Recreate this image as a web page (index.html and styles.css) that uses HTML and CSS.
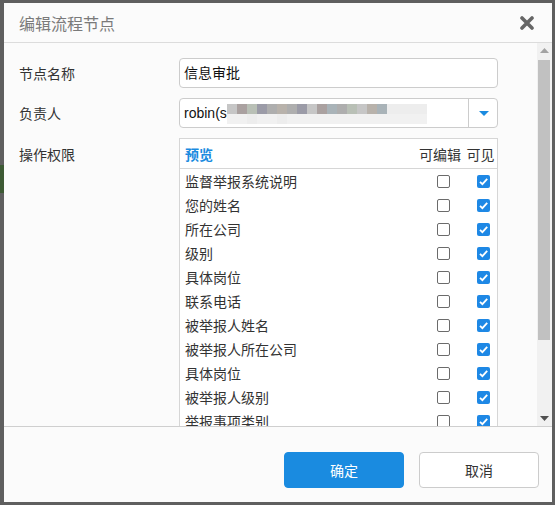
FILE: index.html
```html
<!DOCTYPE html>
<html lang="zh-CN">
<head>
<meta charset="utf-8">
<title>编辑流程节点</title>
<link rel="stylesheet" href="styles.css">
</head>
<body>
<div class="under-green"></div>
<div class="dialog">
  <div class="dlg-head">
    <span class="dlg-title">编辑流程节点</span>
    <svg class="close" width="14" height="14" viewBox="0 0 14 14"><path d="M2 2 L12 12 M12 2 L2 12" stroke="#666" stroke-width="3.6" stroke-linecap="round" fill="none"/></svg>
  </div>
  <div class="dlg-main">
  <div class="dlg-body">
    <div class="form-row">
      <div class="label">节点名称</div>
      <div class="input">信息审批</div>
    </div>
    <div class="form-row">
      <div class="label">负责人</div>
      <div class="select">
        <div class="select-val">
          <span class="val-text">robin(s</span>
          <span class="mosaic">
            <span class="mrow">
              <i class="c1"></i><i class="c2"></i><i class="c3"></i><i class="c4"></i><i class="c5"></i><i class="c6"></i><i class="c5"></i><i class="c4"></i><i class="c1"></i><i class="c2"></i><i class="c7"></i><i class="c5"></i><i class="c3"></i><i class="c1"></i><i class="c6"></i><i class="c7"></i><i class="c8"></i><i class="c8"></i><i class="c8"></i><i class="c8"></i>
            </span>
            <span class="mrow low">
              <i class="c0"></i><i class="c0"></i><i class="c8"></i><i class="c0"></i><i class="c0"></i><i class="c8"></i><i class="c0"></i><i class="c0"></i><i class="c0"></i><i class="c0"></i><i class="c0"></i><i class="c0"></i><i class="c0"></i><i class="c0"></i><i class="c0"></i><i class="c0"></i><i class="c0"></i><i class="c0"></i><i class="c0"></i><i class="c0"></i>
            </span>
          </span>
        </div>
        <div class="select-btn"><span class="tri"></span></div>
      </div>
    </div>
    <div class="form-row">
      <div class="label label-top">操作权限</div>
      <div class="perm">
        <div class="perm-head">
          <span class="ph-name">预览</span>
          <span class="ph-col">可编辑</span>
          <span class="ph-col">可见</span>
        </div>
        <div class="perm-row"><span class="pr-name">监督举报系统说明</span><span class="cb-cell"><span class="cb"></span></span><span class="cb-cell"><span class="cb on"><svg viewBox="0 0 13 13" width="13" height="13"><path d="M3 6.8 L5.4 9.2 L10.2 3.8" stroke="#fff" stroke-width="1.8" fill="none"/></svg></span></span></div>
        <div class="perm-row"><span class="pr-name">您的姓名</span><span class="cb-cell"><span class="cb"></span></span><span class="cb-cell"><span class="cb on"><svg viewBox="0 0 13 13" width="13" height="13"><path d="M3 6.8 L5.4 9.2 L10.2 3.8" stroke="#fff" stroke-width="1.8" fill="none"/></svg></span></span></div>
        <div class="perm-row"><span class="pr-name">所在公司</span><span class="cb-cell"><span class="cb"></span></span><span class="cb-cell"><span class="cb on"><svg viewBox="0 0 13 13" width="13" height="13"><path d="M3 6.8 L5.4 9.2 L10.2 3.8" stroke="#fff" stroke-width="1.8" fill="none"/></svg></span></span></div>
        <div class="perm-row"><span class="pr-name">级别</span><span class="cb-cell"><span class="cb"></span></span><span class="cb-cell"><span class="cb on"><svg viewBox="0 0 13 13" width="13" height="13"><path d="M3 6.8 L5.4 9.2 L10.2 3.8" stroke="#fff" stroke-width="1.8" fill="none"/></svg></span></span></div>
        <div class="perm-row"><span class="pr-name">具体岗位</span><span class="cb-cell"><span class="cb"></span></span><span class="cb-cell"><span class="cb on"><svg viewBox="0 0 13 13" width="13" height="13"><path d="M3 6.8 L5.4 9.2 L10.2 3.8" stroke="#fff" stroke-width="1.8" fill="none"/></svg></span></span></div>
        <div class="perm-row"><span class="pr-name">联系电话</span><span class="cb-cell"><span class="cb"></span></span><span class="cb-cell"><span class="cb on"><svg viewBox="0 0 13 13" width="13" height="13"><path d="M3 6.8 L5.4 9.2 L10.2 3.8" stroke="#fff" stroke-width="1.8" fill="none"/></svg></span></span></div>
        <div class="perm-row"><span class="pr-name">被举报人姓名</span><span class="cb-cell"><span class="cb"></span></span><span class="cb-cell"><span class="cb on"><svg viewBox="0 0 13 13" width="13" height="13"><path d="M3 6.8 L5.4 9.2 L10.2 3.8" stroke="#fff" stroke-width="1.8" fill="none"/></svg></span></span></div>
        <div class="perm-row"><span class="pr-name">被举报人所在公司</span><span class="cb-cell"><span class="cb"></span></span><span class="cb-cell"><span class="cb on"><svg viewBox="0 0 13 13" width="13" height="13"><path d="M3 6.8 L5.4 9.2 L10.2 3.8" stroke="#fff" stroke-width="1.8" fill="none"/></svg></span></span></div>
        <div class="perm-row"><span class="pr-name">具体岗位</span><span class="cb-cell"><span class="cb"></span></span><span class="cb-cell"><span class="cb on"><svg viewBox="0 0 13 13" width="13" height="13"><path d="M3 6.8 L5.4 9.2 L10.2 3.8" stroke="#fff" stroke-width="1.8" fill="none"/></svg></span></span></div>
        <div class="perm-row"><span class="pr-name">被举报人级别</span><span class="cb-cell"><span class="cb"></span></span><span class="cb-cell"><span class="cb on"><svg viewBox="0 0 13 13" width="13" height="13"><path d="M3 6.8 L5.4 9.2 L10.2 3.8" stroke="#fff" stroke-width="1.8" fill="none"/></svg></span></span></div>
        <div class="perm-row"><span class="pr-name">举报事项类别</span><span class="cb-cell"><span class="cb"></span></span><span class="cb-cell"><span class="cb on"><svg viewBox="0 0 13 13" width="13" height="13"><path d="M3 6.8 L5.4 9.2 L10.2 3.8" stroke="#fff" stroke-width="1.8" fill="none"/></svg></span></span></div>
      </div>
    </div>
  </div>
  <div class="vscroll">
    <div class="sb-btn"><svg width="9" height="5" viewBox="0 0 9 5"><path d="M0 5 L4.5 0 L9 5 Z" fill="#a3a3a3"/></svg></div>
    <div class="sb-track"><div class="sb-thumb"></div></div>
    <div class="sb-btn"><svg width="9" height="5" viewBox="0 0 9 5"><path d="M0 0 L9 0 L4.5 5 Z" fill="#505050"/></svg></div>
  </div>
  </div>
  <div class="dlg-foot">
    <button class="btn btn-primary">确定</button>
    <button class="btn btn-default">取消</button>
  </div>
</div>
</body>
</html>
```
FILE: styles.css
```css
* { box-sizing: border-box; }
html, body { margin: 0; padding: 0; }
body {
  width: 555px;
  height: 505px;
  background: #5f5f5f;
  padding: 3px 3px 3px 4px;
  font-family: "Liberation Sans", "Noto Sans CJK SC", sans-serif;
  font-size: 14px;
  color: #333;
  overflow: hidden;
  position: relative;
}
.under-green {
  position: absolute;
  left: 0;
  top: 165px;
  width: 4px;
  height: 28px;
  background: #3d5a34;
}
.dialog {
  width: 548px;
  height: 499px;
  background: #fbfbfb;
  display: flex;
  flex-direction: column;
}
.dlg-head {
  height: 40px;
  flex: none;
  border-bottom: 1px solid #dcdcdc;
  display: flex;
  align-items: center;
  justify-content: space-between;
  padding: 0 18px 0 15px;
}
.dlg-title {
  font-size: 16px;
  color: #7a7a7a;
  padding-top: 1px;
}
.close { display: block; margin-top: 1px; }
.dlg-main {
  height: 383px;
  flex: none;
  display: flex;
}
.dlg-body {
  flex: 1;
  overflow: hidden;
  padding: 15px 0 0 15px;
}
.vscroll {
  width: 15px;
  flex: none;
  background: #f1f1f1;
  display: flex;
  flex-direction: column;
}
.sb-btn {
  height: 15px;
  flex: none;
  display: flex;
  align-items: center;
  justify-content: center;
}
.sb-btn svg { display: block; }
.sb-track {
  flex: 1;
  padding: 2px 2px 0 1px;
}
.sb-thumb {
  height: 280px;
  background: #c1c1c1;
}
.form-row {
  display: flex;
  align-items: center;
  margin-bottom: 10px;
}
.form-row:last-child { margin-bottom: 0; align-items: flex-start; }
.label {
  width: 160px;
  flex: none;
  color: #333;
}
.label-top { padding-top: 6px; }
.input {
  width: 319px;
  height: 30px;
  border: 1px solid #ccc;
  border-radius: 4px;
  background: #fff;
  padding: 0 4px;
  line-height: 28px;
  color: #111;
  font-size: 14px;
}
.select {
  width: 319px;
  height: 30px;
  border: 1px solid #ccc;
  border-radius: 4px;
  background: #fff;
  display: flex;
}
.select-val {
  flex: 1;
  display: flex;
  align-items: center;
  padding-left: 4px;
  color: #111;
}
.val-text { font-size: 14px; }
.mosaic {
  display: flex;
  flex-direction: column;
  margin-top: 2px;
}
.mrow { display: flex; height: 10px; }
.mrow i { display: block; width: 10px; height: 10px; }
.c0 { background: #f1f1f1; }
.c1 { background: #c6c6c6; }
.c2 { background: #aaa1a0; }
.c3 { background: #b9c0b6; }
.c4 { background: #9b9ba7; }
.c5 { background: #aeaeae; }
.c6 { background: #b8b2ab; }
.c7 { background: #a9b3b8; }
.c8 { background: #ededed; }
.select-btn {
  width: 29px;
  flex: none;
  border-left: 1px solid #ccc;
  display: flex;
  align-items: center;
  justify-content: center;
}
.tri {
  width: 0;
  height: 0;
  border-left: 5px solid transparent;
  border-right: 5px solid transparent;
  border-top: 5px solid #1a8be0;
  margin-left: 1px;
}
.perm {
  width: 319px;
  flex: none;
  border: 1px solid #d6d6d6;
  background: #fff;
}
.perm-head, .perm-row {
  display: grid;
  grid-template-columns: 1fr 48px 33px;
  align-items: center;
}
.perm-head {
  height: 30px;
  border-bottom: 1px solid #d6d6d6;
}
.ph-name {
  padding-left: 5px;
  color: #1a8be0;
  font-weight: bold;
}
.ph-col { text-align: center; color: #333; }
.perm-row { height: 24px; }
.pr-name { padding-left: 5px; color: #333; }
.cb-cell {
  display: flex;
  justify-content: center;
  padding-left: 6px;
}
.cb {
  width: 13px;
  height: 13px;
  border: 1px solid #6b6b6b;
  border-radius: 2px;
  background: #fff;
  display: block;
}
.cb.on {
  border: none;
  background: #1e88e5;
}
.cb svg { display: block; }
.dlg-foot {
  flex: 1;
  border-top: 1px solid #cfcfcf;
  display: flex;
  justify-content: flex-end;
  align-items: flex-start;
  gap: 15px;
  padding: 25px 13px 0 0;
}
.btn {
  width: 120px;
  height: 36px;
  border-radius: 4px;
  font-family: "Liberation Sans", "Noto Sans CJK SC", sans-serif;
  font-size: 14px;
  cursor: pointer;
}
.btn-primary {
  background: #1a8be0;
  border: 1px solid #1a8be0;
  color: #fff;
}
.btn-default {
  background: #fff;
  border: 1px solid #ccc;
  color: #333;
}
```
